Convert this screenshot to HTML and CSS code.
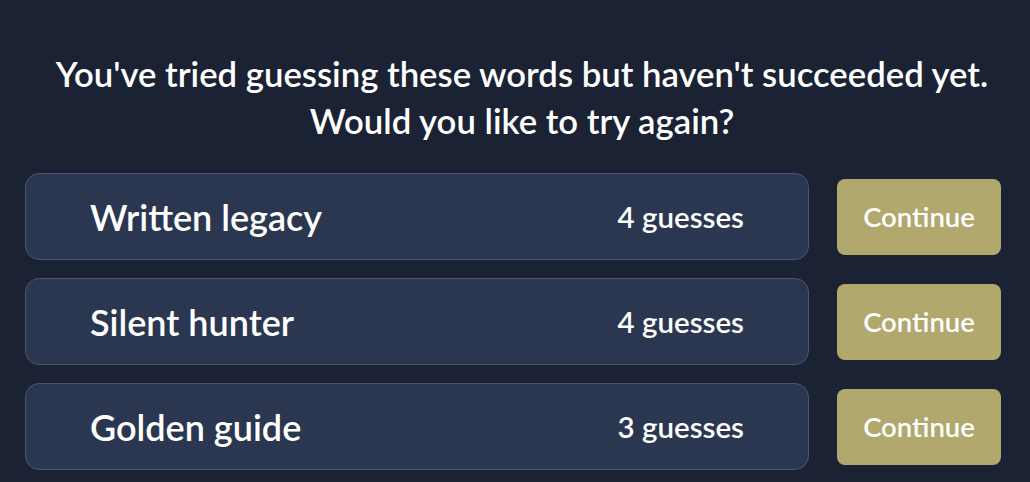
FILE: index.html
```html
<!DOCTYPE html>
<html lang="en">
<head>
    <meta charset="UTF-8">
    <title>Unfinished Words</title>
    <link rel="stylesheet" href="styles.css">
</head>
<body>
    <div class="retry-panel">
        <h2 class="retry-title">You've tried guessing these words but haven't succeeded yet.<br>Would you like to try again?</h2>

        <div class="word-list">
            <div class="word-row">
                <div class="word-card">
                    <span class="word-name">Written legacy</span>
                    <span class="word-guesses">4 guesses</span>
                </div>
                <button class="continue-btn">Continue</button>
            </div>
            <div class="word-row">
                <div class="word-card">
                    <span class="word-name">Silent hunter</span>
                    <span class="word-guesses">4 guesses</span>
                </div>
                <button class="continue-btn">Continue</button>
            </div>
            <div class="word-row">
                <div class="word-card">
                    <span class="word-name">Golden guide</span>
                    <span class="word-guesses">3 guesses</span>
                </div>
                <button class="continue-btn">Continue</button>
            </div>
        </div>
    </div>
</body>
</html>
```

FILE: styles.css
```css
body {
    margin: 0;
    padding: 0;
    background: #1a2234;
    color: #fff;
    font-family: Lato, "Open Sans", sans-serif;
    height: 482px;
    overflow: hidden;
}
.retry-panel {
    padding: 50px 29px 0 25px;
}
.retry-title {
    margin: 0 0 29px 0;
    padding-left: 18px;
    text-align: center;
    font-size: 34.7px;
    font-weight: 600;
    line-height: 47px;
}
.word-list {
    display: flex;
    flex-direction: column;
    gap: 18px;
}
.word-row {
    display: flex;
    align-items: center;
    gap: 28px;
}
.word-card {
    flex: 1;
    height: 85px;
    display: flex;
    justify-content: space-between;
    align-items: center;
    padding: 0 64px;
    background: #2b3750;
    border: 1px solid #4a5670;
    border-radius: 14px;
}
.word-name {
    font-size: 36px;
    font-weight: 600;
}
.word-guesses {
    font-size: 29.5px;
    font-weight: 600;
}
.continue-btn {
    width: 164px;
    height: 76px;
    background: #b1a86d;
    color: #fff;
    border: none;
    border-radius: 8px;
    font-family: inherit;
    font-size: 27.5px;
    font-weight: 600;
    cursor: pointer;
}
```
